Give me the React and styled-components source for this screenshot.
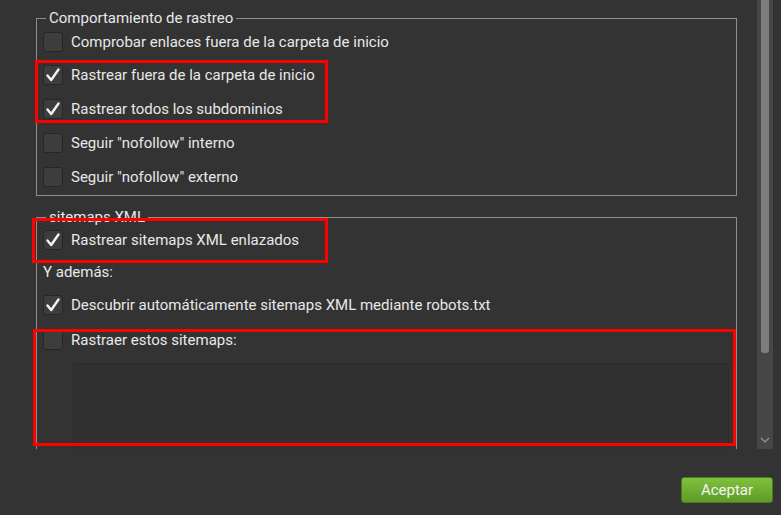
import React from 'react';
import styled, { createGlobalStyle } from 'styled-components';

const GlobalStyle = createGlobalStyle`
  html, body {
    margin: 0;
    padding: 0;
    background: #333333;
  }
  * { box-sizing: border-box; }
`;

function CheckBox({ checked }) {
  return (
    <Box>
      {checked && (
        <svg width="16" height="16" viewBox="0 0 16 16">
          <path d="M2.5 8.5 L6.2 13 L13.5 2.5" fill="none" stroke="#f4f4f4" strokeWidth="2.4" strokeLinecap="round" strokeLinejoin="round" />
        </svg>
      )}
    </Box>
  );
}

function Option({ label, checked, h }) {
  return (
    <Row $h={h}>
      <CheckBox checked={checked} />
      <Label>{label}</Label>
    </Row>
  );
}

function App() {
  return (
    <Window>
      <GlobalStyle />
      <ScrollArea>
        <Content>
          <Group>
            <Legend>Comportamiento de rastreo</Legend>
            <Option label="Comprobar enlaces fuera de la carpeta de inicio" h={32} />
            <Option label="Rastrear fuera de la carpeta de inicio" checked />
            <Option label="Rastrear todos los subdominios" checked />
            <Option label={'Seguir "nofollow" interno'} />
            <Option label={'Seguir "nofollow" externo'} />
          </Group>

          <Group $gap>
            <Legend>sitemaps XML</Legend>
            <Option label="Rastrear sitemaps XML enlazados" checked h={30} />
            <Caption>Y además:</Caption>
            <Option label="Descubrir automáticamente sitemaps XML mediante robots.txt" checked h={32} />
            <Option label="Rastraer estos sitemaps:" h={38} />
            <Sitemaps />
          </Group>
        </Content>
        <Scrollbar>
          <Thumb />
          <Chevron>
            <svg width="10" height="6" viewBox="0 0 10 6">
              <path d="M1 1 L5 5 L9 1" fill="none" stroke="#9a9a9a" strokeWidth="1.2" />
            </svg>
          </Chevron>
        </Scrollbar>
      </ScrollArea>

      <Footer>
        <Button>Aceptar</Button>
      </Footer>

      <Highlight $l={35} $t={60} $w={293} $h={63} />
      <Highlight $l={32} $t={218} $w={296} $h={45} />
      <Highlight $l={33} $t={329} $w={703} $h={117} />
    </Window>
  );
}

const Window = styled.div`
  position: relative;
  width: 781px;
  height: 515px;
  display: flex;
  flex-direction: column;
  background: #333333;
  font-family: Roboto, "Liberation Sans", sans-serif;
  font-size: 15px;
  color: #e8e8e8;
  overflow: hidden;
`;

const ScrollArea = styled.div`
  height: 449px;
  display: flex;
  padding-right: 8px;
`;

const Content = styled.div`
  flex: 1;
  overflow: hidden;
  padding: 10px 20px 0 36px;
`;

const Group = styled.fieldset`
  margin: ${p => (p.$gap ? '13px' : '0')} 0 0 0;
  padding: 0 4px 1px 6px;
  border: 1px solid #8e8e8e;
  border-radius: 0;
  min-width: 0;
`;

const Legend = styled.legend`
  margin-left: 3px;
  padding: 0 3px;
  line-height: 16px;
  font-size: 15px;
  color: #e8e8e8;
`;

const Row = styled.div`
  height: ${p => p.$h || 34}px;
  display: flex;
  align-items: center;
  gap: 8px;
`;

const Box = styled.div`
  width: 20px;
  height: 20px;
  flex: none;
  border-radius: 3px;
  background: #3d3d3d;
  border: 1px solid #262626;
  display: flex;
  align-items: center;
  justify-content: center;
`;

const Label = styled.span`
  white-space: nowrap;
  line-height: 16px;
`;

const Caption = styled.div`
  height: 34px;
  display: flex;
  align-items: center;
`;

const Sitemaps = styled.div`
  margin: 4px 0 0 30px;
  width: 656px;
  height: 110px;
  background: #313131;
  border: 1px solid #2b2b2b;
  border-radius: 3px;
`;

const Scrollbar = styled.div`
  width: 16px;
  flex: none;
  background: #464646;
  display: flex;
  flex-direction: column;
  align-items: center;
`;

const Thumb = styled.div`
  width: 8px;
  height: 353px;
  background: #7d7d7d;
  border-radius: 0 0 3px 3px;
`;

const Chevron = styled.div`
  margin-top: auto;
  height: 12px;
  display: flex;
  align-items: flex-start;
`;

const Footer = styled.div`
  flex: 1;
  display: flex;
  justify-content: flex-end;
  align-items: flex-start;
  padding: 28px 8px 0 0;
`;

const Button = styled.button`
  width: 92px;
  height: 26px;
  border: 1px solid #4b7d1f;
  border-radius: 3px;
  background: linear-gradient(#80c13c, #5d9b27);
  color: #f4f4f4;
  font-family: Roboto, "Liberation Sans", sans-serif;
  font-size: 15px;
  padding: 0;
  cursor: pointer;
`;

const Highlight = styled.div`
  position: absolute;
  left: ${p => p.$l}px;
  top: ${p => p.$t}px;
  width: ${p => p.$w}px;
  height: ${p => p.$h}px;
  border: 3px solid #ff0000;
  pointer-events: none;
`;

export default App;
